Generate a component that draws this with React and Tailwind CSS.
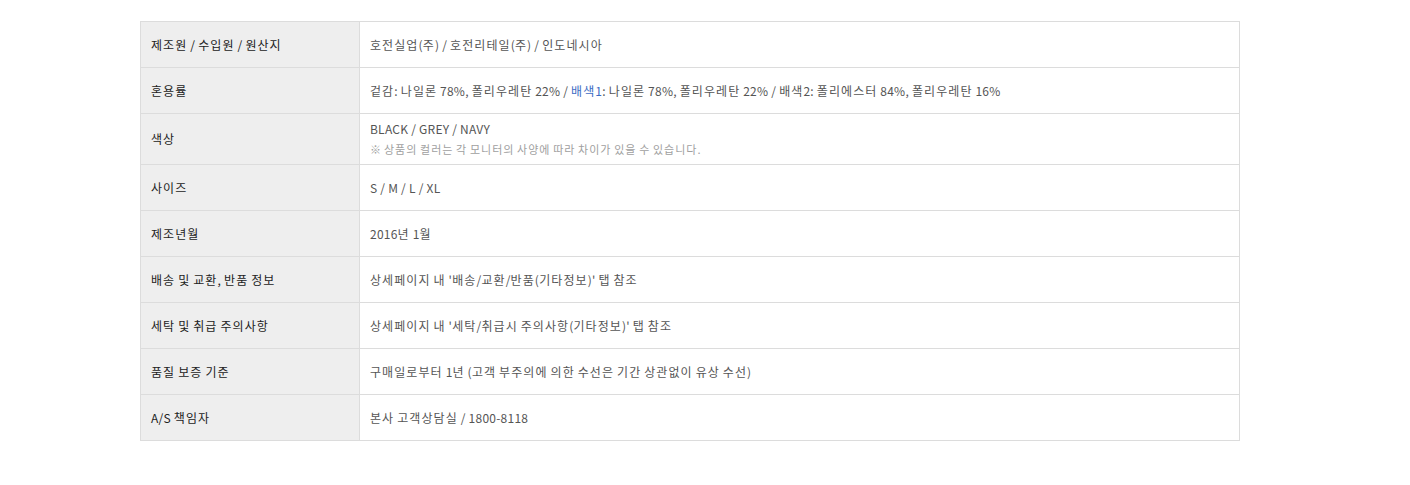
// hangul runs get a little extra spacing so widths match the original gothic font
const K = ({ children }) => {
  const parts = String(children).split(/([\uac00-\ud7a3]+)/);
  return parts.map((p, i) =>
    /[\uac00-\ud7a3]/.test(p) ? (
      <span key={i} className="tracking-[0.09em]">
        {p}
      </span>
    ) : (
      p
    )
  );
};

const rows = [
  { label: '제조원 / 수입원 / 원산지', value: <K>호전실업(주) / 호전리테일(주) / 인도네시아</K> },
  {
    label: '혼용률',
    value: (
      <>
        <K>겉감: 나일론 78%, 폴리우레탄 22% / </K>
        <span className="text-[#3b6cc4]">
          <K>배색1</K>
        </span>
        <K>: 나일론 78%, 폴리우레탄 22% / 배색2: 폴리에스터 84%, 폴리우레탄 16%</K>
      </>
    ),
  },
  {
    label: '색상',
    value: (
      <div className="flex flex-col leading-[20px]">
        <span>BLACK / GREY / NAVY</span>
        <span className="text-[11px] text-[#a0a0a0]">
          <K>※ 상품의 컬러는 각 모니터의 사양에 따라 차이가 있을 수 있습니다.</K>
        </span>
      </div>
    ),
    tall: true,
  },
  { label: '사이즈', value: 'S / M / L / XL' },
  { label: '제조년월', value: <K>2016년 1월</K> },
  { label: '배송 및 교환, 반품 정보', value: <K>상세페이지 내 '배송/교환/반품(기타정보)' 탭 참조</K> },
  { label: '세탁 및 취급 주의사항', value: <K>상세페이지 내 '세탁/취급시 주의사항(기타정보)' 탭 참조</K> },
  { label: '품질 보증 기준', value: <K>구매일로부터 1년 (고객 부주의에 의한 수선은 기간 상관없이 유상 수선)</K> },
  { label: 'A/S 책임자', value: <K>본사 고객상담실 / 1800-8118</K> },
];

export default function App() {
  return (
    <div className="w-full bg-white pt-[21px] font-['Noto_Sans_CJK_KR','Noto_Sans',sans-serif] text-[12px] tracking-[0.02em]">
      <table className="ml-[140px] w-[1100px] border-collapse border border-[#dcdcdc]">
        <tbody>
          {rows.map((row) => (
            <tr key={row.label} className={row.tall ? 'h-[51px]' : 'h-[46px]'}>
              <th className="w-[219px] border border-[#dcdcdc] bg-[#eeeeee] pl-[10px] text-left font-normal text-[#222]">
                <K>{row.label}</K>
              </th>
              <td className="border border-[#dcdcdc] pl-[10px] text-[#555]">{row.value}</td>
            </tr>
          ))}
        </tbody>
      </table>
    </div>
  );
}
